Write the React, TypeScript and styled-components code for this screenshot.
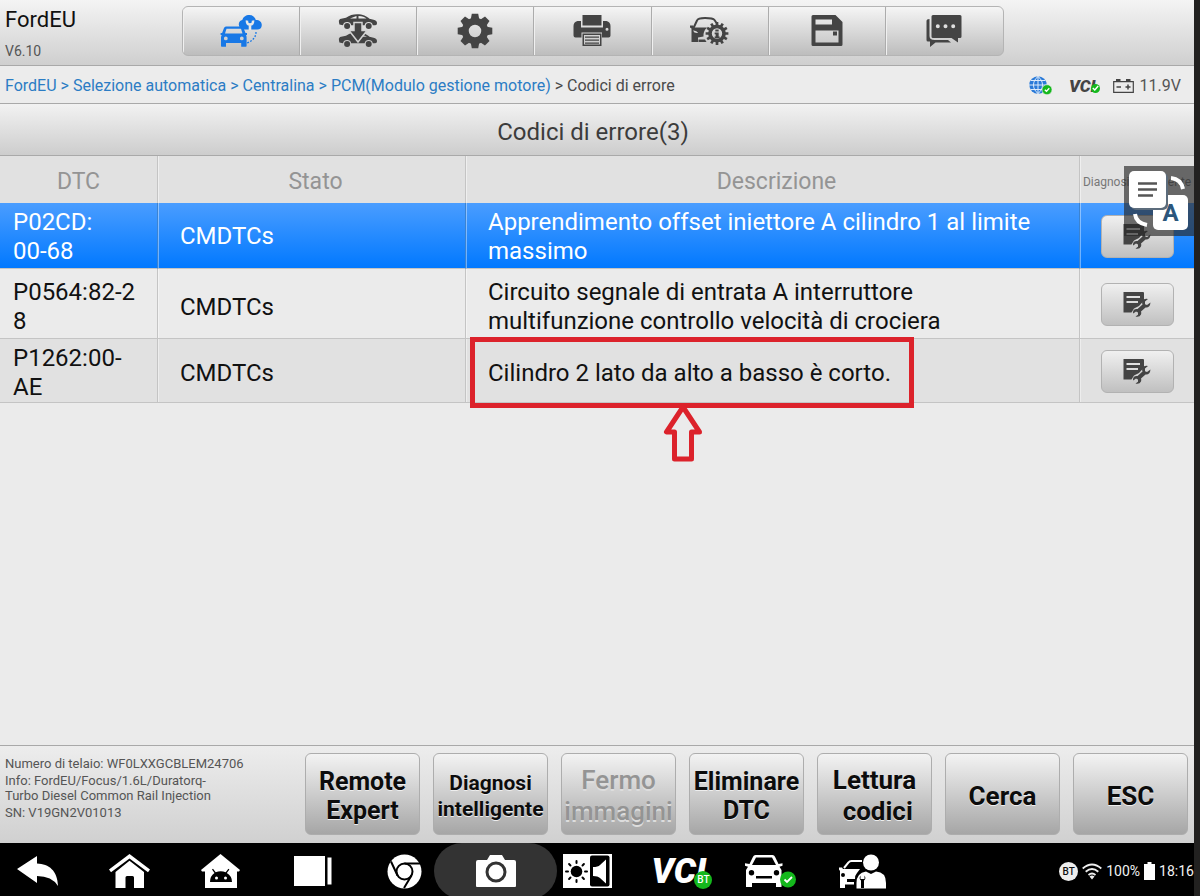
import React from "react";
import styled, { createGlobalStyle, css } from "styled-components";

const GlobalStyle = createGlobalStyle`
  *, *::before, *::after { box-sizing: border-box; }
  body { margin: 0; background: #222120; }
  body, button { font-family: Roboto, "Open Sans", sans-serif; }
  svg { display: block; }
`;

const Device = styled.div`
  display: flex;
  flex-direction: column;
  min-height: 100vh;
  margin-right: 6px;
  position: relative;
  background: #ebebeb;
  color: #111;
`;

const TopBar = styled.header`
  display: grid;
  grid-template-columns: 182px 1fr 190px;
  height: 66px;
  padding-top: 6px;
  align-items: start;
  background: linear-gradient(#f4f4f4, #cfcfcf);
  border-bottom: 1px solid #a9a9a9;
`;

const Brand = styled.div`
  padding-left: 5px;
`;

const BrandName = styled.h1`
  margin: 0;
  font-size: 22px;
  line-height: 28px;
  font-weight: 400;
`;

const Version = styled.div`
  margin-top: 8px;
  font-size: 14px;
  line-height: 18px;
  color: #555;
`;

const Toolbar = styled.nav`
  display: grid;
  grid-template-columns: repeat(7, 1fr);
  height: 50px;
  border: 1px solid #b4b4b4;
  border-radius: 6px;
  overflow: hidden;
  background: linear-gradient(#f5f5f5, #bdbdbd);
`;

const ToolButton = styled.button<{ $active?: boolean }>`
  display: flex;
  align-items: center;
  justify-content: center;
  padding: 0;
  border: 0;
  border-right: 1px solid #acacac;
  box-shadow: inset 1px 0 #f0f0f0;
  background: transparent;
  color: ${(p) => (p.$active ? "#1878e6" : "#444")};
  &:last-child { border-right: 0; }
`;

const PathBar = styled.div`
  display: flex;
  align-items: center;
  justify-content: space-between;
  height: 38px;
  padding: 3px 13px 0 5px;
  background: #ececec;
  border-bottom: 1px solid #a9a9a9;
`;

const Breadcrumb = styled.nav`
  font-size: 16px;
  line-height: 20px;
  color: #4a4a4a;
`;

const Crumb = styled.a`
  color: #2b7cc4;
  text-decoration: none;
`;

const Separator = styled.span<{ $last?: boolean }>`
  color: ${(p) => (p.$last ? "#4a4a4a" : "#2b7cc4")};
`;

const StatusGroup = styled.div`
  display: flex;
  align-items: center;
  gap: 17px;
  color: #444;
`;

const Voltage = styled.span`
  display: flex;
  align-items: center;
  gap: 6px;
  font-size: 16px;
  line-height: 20px;
  color: #555;
`;

const Vci = styled.span<{ $size: number }>`
  position: relative;
  display: inline-block;
  font-size: ${(p) => p.$size}px;
  line-height: 1;
  font-weight: 900;
  font-style: italic;
`;

const Badge = styled.span<{ $size: number }>`
  position: absolute;
  right: ${(p) => (p.$size > 12 ? -6 : -4)}px;
  bottom: ${(p) => (p.$size > 12 ? 0 : 2)}px;
  display: flex;
  align-items: center;
  justify-content: center;
  width: ${(p) => p.$size}px;
  height: ${(p) => p.$size}px;
  border-radius: 50%;
  background: #14b81c;
  color: #fff;
  font-size: 10px;
  font-weight: 500;
  font-style: normal;
`;

const TitleBar = styled.h2`
  display: flex;
  align-items: center;
  justify-content: center;
  height: 52px;
  margin: 0;
  padding: 4px 8px 0 0;
  font-size: 24px;
  line-height: 28px;
  font-weight: 400;
  color: #3c3c3c;
  background: linear-gradient(#f2f2f2, #cdcdcd);
  border-bottom: 1px solid #a9a9a9;
`;

const CodeTable = styled.table`
  width: 100%;
  table-layout: fixed;
  border-collapse: separate;
  border-spacing: 0;
  font-size: 24px;
  line-height: 29px;
`;

const Col = styled.col<{ $width?: number }>`
  ${(p) => p.$width && css`width: ${p.$width}px;`}
`;

const HeadCell = styled.th<{ $small?: boolean }>`
  height: 47px;
  padding: 4px 0 0 ${(p) => (p.$small ? 0 : 8)}px;
  font-size: ${(p) => (p.$small ? 12 : 23)}px;
  line-height: 28px;
  font-weight: 400;
  white-space: nowrap;
  color: ${(p) => (p.$small ? "#777" : "#949494")};
  background: #e1e1e1;
  border-right: 1px solid #c4c4c4;
  box-shadow: inset 1px 0 #efefef;
  &:first-child { padding-left: 0; box-shadow: none; }
  &:last-child { border-right: 0; }
`;

type Tone = "selected" | "light" | "dark";

const tones = {
  selected: css`
    --line: #3c83cf;
    --drop: 2px;
    background: linear-gradient(#4a9dff, #0078ff);
    color: #fff;
    height: 66px;
  `,
  light: css`
    --line: #c4c4c4;
    --drop: 7px;
    background: #ebebeb;
    height: 70px;
  `,
  dark: css`
    --line: #c4c4c4;
    --drop: 5px;
    background: #e1e1e1;
    height: 64px;
  `,
};

const Row = styled.tr<{ $tone: Tone }>`
  ${(p) => tones[p.$tone]}
`;

const Cell = styled.td<{ $inset: number }>`
  position: relative;
  padding: var(--drop) 16px 0 ${(p) => p.$inset}px;
  border-right: 1px solid var(--line);
  border-bottom: 1px solid #c4c4c4;
  box-shadow: inset 1px 0 rgba(255, 255, 255, 0.4);
`;

const CodeCell = styled(Cell)`
  padding-right: 8px;
  white-space: pre-line;
  word-break: break-all;
  box-shadow: none;
`;

const ActionCell = styled.td`
  padding: 2px 0 0;
  border-bottom: 1px solid #c4c4c4;
  box-shadow: inset 1px 0 rgba(255, 255, 255, 0.4);
`;

const ActionButton = styled.button`
  display: flex;
  align-items: center;
  justify-content: center;
  width: 73px;
  height: 43px;
  margin: 0 auto;
  padding: 0;
  color: #444;
  border: 1px solid #b2b2b2;
  border-radius: 6px;
  background: linear-gradient(#f0f0f0, #c0c0c0);
`;

const Highlight = styled.div`
  position: absolute;
  top: -2px;
  left: 4px;
  width: 444px;
  height: 71px;
  border: 5px solid #dc222b;
  pointer-events: none;
`;

const Pointer = styled.svg`
  position: absolute;
  top: 61px;
  left: 189px;
`;

const Footer = styled.footer`
  display: grid;
  grid-template-columns: 1fr repeat(7, 115px);
  column-gap: 13px;
  height: 98px;
  margin-top: auto;
  padding: 7px 6px 8px 5px;
  background: linear-gradient(#ededed, #d0d0d0);
  border-top: 1px solid #a9a9a9;
`;

const VehicleInfo = styled.div`
  padding-top: 3px;
  font-size: 13px;
  line-height: 15px;
  color: #555;
`;

const InfoLine = styled.p`
  margin: 0 0 2px;
  white-space: pre-line;
`;

const FooterButton = styled.button<{ $size: number; $line: number }>`
  height: 82px;
  padding: 4px 0 0;
  border: 1px solid #adadad;
  border-radius: 6px;
  background: linear-gradient(#f3f3f3, #a6a6a6);
  color: #0c0c0c;
  font-size: ${(p) => p.$size}px;
  line-height: ${(p) => p.$line}px;
  font-weight: 700;
  white-space: pre;
  text-shadow: 0 1px #eee;
  &:disabled { color: #949494; font-weight: 500; text-shadow: 0 2px #ddd; }
`;

const SystemBar = styled.div`
  height: 53px;
  overflow: hidden;
  background: #000;
`;

const SystemGrid = styled.div`
  display: grid;
  grid-template-columns: repeat(10, minmax(0, 1fr)) 286px;
  align-items: center;
  justify-items: center;
  height: 56px;
  margin-left: -8px;
`;

const SystemButton = styled.button<{ $lit?: boolean }>`
  display: flex;
  align-items: center;
  justify-content: center;
  width: ${(p) => (p.$lit ? 123 : 60)}px;
  height: 56px;
  margin: 0 ${(p) => (p.$lit ? -16 : 0)}px;
  padding: 0;
  border: 0;
  border-radius: 28px;
  background: ${(p) => (p.$lit ? "#333" : "transparent")};
  color: #fff;
`;

const Tray = styled.div`
  display: flex;
  align-items: center;
  justify-self: end;
  gap: 4px;
  font-size: 14px;
  line-height: 18px;
  color: #f2f2f2;
`;

const BtDisc = styled.span`
  width: 19px;
  height: 19px;
  border-radius: 50%;
  background: #eee;
  color: #111;
  font-size: 10px;
  line-height: 19px;
  font-weight: 500;
  text-align: center;
`;

const TranslateBubble = styled.button`
  position: absolute;
  top: 166px;
  right: 0;
  width: 70px;
  height: 70px;
  padding: 0;
  border: 0;
  background: rgba(40, 40, 40, 0.66);
`;

const Page = styled.span`
  position: absolute;
  top: 5px;
  left: 5px;
  z-index: 1;
  display: flex;
  align-items: center;
  justify-content: center;
  width: 37px;
  height: 37px;
  border-radius: 5px;
  background: #fff;
  box-shadow: 2px 2px #5c6c7c;
`;

const Letter = styled.span`
  position: absolute;
  top: 29px;
  left: 29px;
  width: 35px;
  height: 35px;
  border-radius: 5px;
  background: #fff;
  color: #2c567c;
  font-size: 24px;
  line-height: 37px;
  font-weight: 700;
`;

const Arcs = styled.svg`
  position: absolute;
  inset: 0;
`;

const CloudCarIcon = () => (
  <svg width="42" height="32" viewBox="0 0 42 32" fill="currentColor">
    <path fillRule="evenodd" d="M6 11.500h15.500q1.500 0 2 1.500l2 5h1.500v2h-1q.6 1 .6 2.500V31a.8.8 0 0 1-.8.800h-4.600V28H6v3.800H1.800A.8.8 0 0 1 1 31v-8.500Q1 21 1.800 20H.6v-2h1.500L4 13Q4.500 11.500 6 11.500ZM6.500 13.800 5 18.500h17.500L21 13.800ZM5.800 21.500a1.900 1.900 0 1 0 0 3.800 1.900 1.900 0 0 0 0-3.800Zm16 0a1.900 1.900 0 1 0 0 3.800 1.900 1.900 0 0 0 0-3.800Z" />
    <path d="M23.500 14.500a5 5 0 0 1-4.700-5.300c0-2 1.300-3.700 3.500-4.200.8-3 3.700-5 6.900-5 3.500 0 5.800 2 6.600 5 3.800 0 6 2 6 5s-2 4.500-4.500 4.500Z" />
    <path d="M27 5.500q-.5 4 3 4t3-4M30 9v6" fill="none" stroke="#e8e8e8" strokeWidth="2.600" />
    <path d="M36 17c0 4.500-2.500 8.500-9 11" fill="none" stroke="currentColor" strokeWidth="1.300" strokeDasharray="1.800 1.500" />
  </svg>
);

const sedan =
  "M1 8.500q-.8-2 1-3.500l6-1.300Q13 .3 19 .3c6 0 9.500 2 12.500 4.400l5 1.300Q39.800 7 38.800 10.500l-1.500.8H34.800a4.200 4.200 0 0 0-8.200 0H13.200a4.200 4.200 0 0 0-8.200 0L1.400 10.500Z";

const SwapCarsIcon = () => (
  <svg width="40" height="34" viewBox="0 0 40 34" fill="currentColor">
    <path d={sedan} />
    <circle cx="9.100" cy="12" r="3" />
    <circle cx="30.700" cy="12" r="3" />
    <path d="M12 4.400 18.500 2v2.500Zm8.500-2.500c4 0 6 1 8 2.700l-8 0Z" fill="#ececec" />
    <g transform="translate(0 18)">
      <path d={sedan} />
      <circle cx="9.100" cy="12" r="3" />
      <circle cx="30.700" cy="12" r="3" />
      <path d="m24 2.500 5 2.300h-6Z" fill="#ccc" />
    </g>
    <path d="M16 8.500h8v8h5L20 28l-9-11.500h5Z" stroke="#d4d4d4" strokeWidth="1.500" />
  </svg>
);

const Gear = ({ teeth, hole }: { teeth: number; hole: number }) => (
  <>
    {Array.from({ length: teeth }, (_, i) => (
      <path key={i} d={teeth > 8 ? "M-2-17h4v8h-4Z" : "M-3.200-17.300h6.400l1.300 7h-9Z"} transform={`rotate(${(i * 360) / teeth})`} />
    ))}
    <circle r={(12.500 + hole) / 2} fill="none" stroke="currentColor" strokeWidth={14 - hole} />
  </>
);

const SettingsIcon = () => (
  <svg width="36" height="36" viewBox="-18 -18 36 36" fill="currentColor">
    <Gear teeth={8} hole={7} />
  </svg>
);

const PrinterIcon = () => (
  <svg width="38" height="32" viewBox="0 0 38 32" fill="currentColor">
    <path d="M9.500 0h19v10.500h-19Z" />
    <path fillRule="evenodd" d="M4.500 6H8v6.500h22V6h3.500q4 1 4 5v9.500q0 2-2 2H29v-5H8.500v5h-6q-2 0-2-2V11q0-4 4-5ZM34 12.800a1.500 1.500 0 1 0 0 3 1.500 1.500 0 0 0 0-3Z" />
    <path fillRule="evenodd" d="M9.500 18.500h19V31h-19ZM11 20v9.500h16V20Zm1 1.500h14v1.300H12Zm0 3h14v1.300H12Zm0 3h14v1.300H12Z" />
  </svg>
);

const CarInfoIcon = () => (
  <svg width="39" height="28" viewBox="0 0 39 28" fill="currentColor">
    <path d="M3.500 11 7 3.500Q8 1 15 1q8 0 9.500 2l2 3" fill="none" stroke="currentColor" strokeWidth="2" />
    <path fillRule="evenodd" d="M0 8.500h3l1 2h13q-4 4-3.500 9L8 20.500V25H1.500V11.500L0 10.500ZM3 13.500q1 3 5 2.500-1-2.500-5-2.500Z" />
    <path d="M8.500 22.500H15l1.500 2.500h-8Z" />
    <g transform="translate(27 16.500) scale(.67)">
      <Gear teeth={12} hole={8.500} />
      <path d="M-2.500-6h5v3h-5ZM-3.500-1.500h6V4.500H4V7h-7.500V4.500H-2V1h-1.500Z" />
    </g>
  </svg>
);

const SaveIcon = () => (
  <svg width="32" height="32" viewBox="0 0 32 32" fill="currentColor">
    <path fillRule="evenodd" d="M2 0h22.500L31.500 7v22.500a1.500 1.500 0 0 1-1.500 1.500H2a1.500 1.500 0 0 1-1.500-1.500v-28Q.5 0 2 0ZM4.500 4.500v5H21v-5Zm0 11v12h23v-12Zm17.500 1h4v4h-4Z" />
  </svg>
);

const ChatIcon = () => (
  <svg width="36" height="32" viewBox="0 0 36 32" fill="currentColor">
    <path fillRule="evenodd" d="M7 0h27q1.500 0 1.500 1.500v20q0 1.500-1.500 1.500h-2v4.500L25.500 23H7q-1.500 0-1.500-1.500v-20Q5.500 0 7 0Zm4.800 9.300a2 2 0 1 0 0 4 2 2 0 0 0 0-4Zm7.700 0a2 2 0 1 0 0 4 2 2 0 0 0 0-4Zm7.700 0a2 2 0 1 0 0 4 2 2 0 0 0 0-4Z" />
    <path d="M3.500 4Q.5 4 .5 6v19q0 1.500 1.500 1.500h2V32l5.500-4.500H25l-3-2.500H8.500Q3.500 25 3.500 21Z" />
  </svg>
);

const GlobeIcon = () => (
  <svg width="23" height="20" viewBox="0 0 23 20" fill="none">
    <circle cx="9" cy="9" r="8.700" fill="#2a7ad8" />
    <path d="M9 0v18M0 9h18M2 4.500h14M2 13.500h14M9 .5c-6 4.500-6 12.500 0 17 6-4.500 6-12.500 0-17Z" stroke="#dceafa" />
    <circle cx="18" cy="13.700" r="5" fill="#14b81c" stroke="#ececec" strokeWidth=".6" />
    <path d="m15.800 13.700 1.700 1.600 2.800-3" stroke="#fff" strokeWidth="1.300" />
  </svg>
);

const Check = () => (
  <svg width="7" height="6" viewBox="0 0 7 6" fill="none" stroke="#fff" strokeWidth="1.400">
    <path d="m.8 3 2 2L6.200 1" />
  </svg>
);

const CarBatteryIcon = () => (
  <svg width="21" height="14" viewBox="0 0 21 14" fill="none" stroke="#444">
    <path d="M.7 2.700h19.600v10.600H.7Z" strokeWidth="1.200" />
    <path d="M3 1.200h4.500M13 1.200h4.500" strokeWidth="2.400" />
    <path d="M3.500 8H8M12.500 8h5M15 5.500v5" strokeWidth="1.500" />
  </svg>
);

const RepairIcon = () => (
  <svg width="28" height="25" viewBox="0 0 28 25" fill="currentColor">
    <path fillRule="evenodd" d="M.5 0H20q1 0 1 1v7.500l-5 5.500-5 2.500-2.500 4H.5ZM3.500 4v2h13.500V4Zm0 5v2H15V9Z" />
    <path d="M27.500 10.500 24 13l-2-.8V9.500l3-2.500q-4-1-5.500 2.200-.8 1.600 0 3.300L14.500 17q-4-.5-4.500 3 0 1 .3 1.500l2.700-2 2 1v2.200L12.500 24.500q4 1 5.500-2 .5-1.500 0-3l4.500-4q4.500.5 5-5Z" />
  </svg>
);

const BackIcon = () => (
  <svg width="42" height="31" viewBox="0 0 42 31" fill="currentColor">
    <path d="M0 13 20 0v7.500C32 8 40.500 14.500 41 30q-6-10-21-10v7Z" />
  </svg>
);

const HomeIcon = () => (
  <svg width="41" height="35" viewBox="0 0 41 35" fill="currentColor">
    <path d="M20.500 0 41 15.500l-2 2.800L20.500 4.500 2 18.300 0 15.500Z" />
    <path d="M20.500 6.800 35 18v16H25V23.500q0-1.500-1.500-1.500h-5.500q-1.500 0-1.500 1.500V34H6.500V18Z" />
  </svg>
);

const AndroidHomeIcon = () => (
  <svg width="39" height="35" viewBox="0 0 39 35" fill="currentColor">
    <path d="M19.500 0 39 16l-1 1.500h-2V34H4V17.500H1L0 16Z" />
    <path d="M9 28q0-6 4.500-9L11 15.500l1-.8 2.700 3.500q5-2 10 0l2.700-3.500 1 .8-2.600 3.500Q31 22 31 28Z" fill="#000" />
    <circle cx="15.500" cy="24" r="1.500" />
    <circle cx="24.500" cy="24" r="1.500" />
  </svg>
);

const RecentsIcon = () => (
  <svg width="38" height="30" viewBox="0 0 38 30" fill="currentColor">
    <path d="M0 0h31v30H0ZM33.500 1.500h4v27h-4Z" />
  </svg>
);

const ChromeIcon = () => (
  <svg width="35" height="35" viewBox="0 0 35 35" fill="none" stroke="#000" strokeWidth="2">
    <circle cx="17.500" cy="17.500" r="17" fill="#fff" stroke="none" />
    <circle cx="17.500" cy="17.500" r="8" />
    <path d="M17.500 9.500H33M10.500 21.500 4 7.500M24.500 21.500 17 34" />
    <circle cx="17.500" cy="17.500" r="4" fill="#fff" stroke="none" />
  </svg>
);

const CameraIcon = () => (
  <svg width="40" height="32" viewBox="0 0 40 32" fill="currentColor">
    <path fillRule="evenodd" d="M2 5h9l3-5h12l3 5h9q2 0 2 2v24q0 1-1 1H1q-1 0-1-1V7q0-2 2-2ZM20 6.500a10.500 10.500 0 1 0 0 21 10.500 10.500 0 0 0 0-21Zm0 3a7.500 7.500 0 1 1 0 15 7.500 7.500 0 0 1 0-15Z" />
  </svg>
);

const DisplayIcon = () => (
  <svg width="49" height="34" viewBox="0 0 49 34" fill="none">
    <path d="M0 0h49v34H0Z" fill="#fff" />
    <circle cx="13.500" cy="17.500" r="5.800" fill="#000" />
    <g stroke="#000" strokeWidth="2" strokeLinecap="round">
      {Array.from({ length: 8 }, (_, i) => (
        <path key={i} d="M13.500 7v2" transform={`rotate(${i * 45} 13.500 17.500)`} />
      ))}
    </g>
    <rect x="27" y="1.500" width="19.500" height="31" rx="2" fill="#000" />
    <path d="M30 13q5 0 7-2l6-5.500v24L37 24q-2-2-7-2Z" fill="#fff" />
  </svg>
);

const CarOkIcon = () => (
  <svg width="51" height="33" viewBox="0 0 51 33" fill="currentColor">
    <path fillRule="evenodd" d="M10.500 0h17q1.800 0 2.500 1.800L33.500 9l4-.8v2.500l-3 1 2 3.300V32H31v-4H7v4H1V15l2-3.300-3-1V8.200L4.500 9 8 1.800Q8.700 0 10.500 0Zm.5 2.500L7 10h24l-4-7.500ZM6.500 15a2.700 2.700 0 1 0 0 5.400 2.700 2.700 0 0 0 0-5.400Zm25 0a2.700 2.700 0 1 0 0 5.400 2.700 2.700 0 0 0 0-5.400ZM11 21v2.500h16V21Z" />
    <circle cx="43" cy="24.500" r="8" fill="#14b81c" />
    <path d="m39.500 24.500 2.500 2.500 5-5" fill="none" stroke="#fff" strokeWidth="1.800" />
  </svg>
);

const TechnicianIcon = () => (
  <svg width="47" height="35" viewBox="0 0 47 35" fill="currentColor">
    <path d="M5 14 9.500 8.500q1-1.500 3-1.500H23" fill="none" stroke="currentColor" strokeWidth="2" />
    <path fillRule="evenodd" d="M0 13.500h3l1 1.500h17l-3 4q-2 2-2 6H8v3h7v2.500H6V34H1V17l-1-1.500ZM4 19a2 2 0 1 0 0 4 2 2 0 0 0 0-4Z" />
    <circle cx="32" cy="8.500" r="8" />
    <path fillRule="evenodd" d="M27 17.500 32 20l5-2.500Q47 18 47 29v5.500H17.500V29q0-10 9.500-11.500ZM21.500 21.500q-2 3 .5 5V34h3v-7.500q2.500-2 .5-5V25h-4Z" />
  </svg>
);

const WifiIcon = () => (
  <svg width="20" height="17" viewBox="0 0 20 17" fill="none" stroke="#eee" strokeWidth="1.800">
    <path d="M.7 5.500q9.300-8 18.600 0M3.700 8.800q6.300-5.500 12.600 0M6.500 12q3.500-3 7 0" />
    <path d="m7.500 13.500 2.500 3 2.500-3q-2.500-1.800-5 0Z" fill="#eee" stroke="none" />
  </svg>
);

const ChargeIcon = () => (
  <svg width="11" height="18" viewBox="0 0 11 18" fill="#fff">
    <path d="M3.500 0h4v2H11v16H0V2h3.500Z" />
  </svg>
);

const tools = [
  { label: "Diagnosi cloud", icon: <CloudCarIcon />, active: true },
  { label: "Cambia veicolo", icon: <SwapCarsIcon /> },
  { label: "Impostazioni", icon: <SettingsIcon /> },
  { label: "Stampa", icon: <PrinterIcon /> },
  { label: "Info veicolo", icon: <CarInfoIcon /> },
  { label: "Salva", icon: <SaveIcon /> },
  { label: "Messaggi", icon: <ChatIcon /> },
];

const crumbs = ["FordEU", "Selezione automatica", "Centralina", "PCM(Modulo gestione motore)"];

const codes: { code: string; status: string; text: string; tone: Tone; marked?: boolean }[] = [
  { code: "P02CD:\n00-68", status: "CMDTCs", text: "Apprendimento offset iniettore A cilindro 1 al limite massimo", tone: "selected" },
  { code: "P0564:82-2\n8", status: "CMDTCs", text: "Circuito segnale di entrata A interruttore multifunzione controllo velocità di crociera", tone: "light" },
  { code: "P1262:00-\nAE", status: "CMDTCs", text: "Cilindro 2 lato da alto a basso è corto.", tone: "dark", marked: true },
];

const actions = [
  { label: "Remote\nExpert", size: 25, line: 29 },
  { label: "Diagnosi\nintelligente", size: 21, line: 26 },
  { label: "Fermo\nimmagini", size: 26, line: 31, disabled: true },
  { label: "Eliminare\nDTC", size: 25, line: 29 },
  { label: "Lettura\n codici", size: 26, line: 31 },
  { label: "Cerca", size: 26, line: 31 },
  { label: "ESC", size: 26, line: 31 },
];

const systemItems = [
  { label: "Indietro", icon: <BackIcon /> },
  { label: "Home", icon: <HomeIcon /> },
  { label: "Home Android", icon: <AndroidHomeIcon /> },
  { label: "Recenti", icon: <RecentsIcon /> },
  { label: "Chrome", icon: <ChromeIcon /> },
  { label: "Fotocamera", icon: <CameraIcon />, lit: true },
  { label: "Schermo e audio", icon: <DisplayIcon /> },
  { label: "VCI", icon: <Vci $size={35}>VCI<Badge $size={18}>BT</Badge></Vci> },
  { label: "Veicolo", icon: <CarOkIcon /> },
  { label: "Assistenza", icon: <TechnicianIcon /> },
];

export default function App() {
  return (
    <>
      <GlobalStyle />
      <Device>
        <TopBar>
          <Brand>
            <BrandName>FordEU</BrandName>
            <Version>V6.10</Version>
          </Brand>
          <Toolbar>
            {tools.map((t) => (
              <ToolButton key={t.label} aria-label={t.label} $active={t.active}>{t.icon}</ToolButton>
            ))}
          </Toolbar>
        </TopBar>

        <PathBar>
          <Breadcrumb>
            {crumbs.map((c, i) => (
              <React.Fragment key={c}>
                <Crumb href="#">{c}</Crumb>
                <Separator $last={i === crumbs.length - 1}> &gt; </Separator>
              </React.Fragment>
            ))}
            <span>Codici di errore</span>
          </Breadcrumb>
          <StatusGroup>
            <GlobeIcon />
            <Vci $size={17}>VCI<Badge $size={9}><Check /></Badge></Vci>
            <Voltage><CarBatteryIcon />11.9V</Voltage>
          </StatusGroup>
        </PathBar>

        <TitleBar>Codici di errore(3)</TitleBar>

        <CodeTable>
          <colgroup>
            <Col $width={158} />
            <Col $width={308} />
            <Col />
            <Col $width={114} />
          </colgroup>
          <thead>
            <tr>
              <HeadCell>DTC</HeadCell>
              <HeadCell>Stato</HeadCell>
              <HeadCell>Descrizione</HeadCell>
              <HeadCell $small>Diagnosi intelligente</HeadCell>
            </tr>
          </thead>
          <tbody>
            {codes.map((c) => (
              <Row key={c.code} $tone={c.tone}>
                <CodeCell $inset={13}>{c.code}</CodeCell>
                <Cell $inset={22}>{c.status}</Cell>
                <Cell $inset={22}>
                  {c.text}
                  {c.marked && (
                    <>
                      <Highlight />
                      <Pointer width="56" height="64" viewBox="0 0 56 64" fill="none" stroke="#dc222b" strokeWidth="5" strokeLinejoin="round">
                        <path d="M28 7 11.500 32h8v27h17V32h8Z" />
                      </Pointer>
                    </>
                  )}
                </Cell>
                <ActionCell>
                  <ActionButton aria-label="Diagnosi intelligente"><RepairIcon /></ActionButton>
                </ActionCell>
              </Row>
            ))}
          </tbody>
        </CodeTable>

        <Footer>
          <VehicleInfo>
            <InfoLine>Numero di telaio: WF0LXXGCBLEM24706</InfoLine>
            <InfoLine>{"Info: FordEU/Focus/1.6L/Duratorq-\nTurbo Diesel Common Rail Injection"}</InfoLine>
            <InfoLine>SN: V19GN2V01013</InfoLine>
          </VehicleInfo>
          {actions.map((a) => (
            <FooterButton key={a.label} $size={a.size} $line={a.line} disabled={a.disabled}>{a.label}</FooterButton>
          ))}
        </Footer>

        <SystemBar>
          <SystemGrid>
            {systemItems.map((s) => (
              <SystemButton key={s.label} aria-label={s.label} $lit={s.lit}>{s.icon}</SystemButton>
            ))}
            <Tray>
              <BtDisc>BT</BtDisc>
              <WifiIcon />
              <span>100%</span>
              <ChargeIcon />
              <span>18:16</span>
            </Tray>
          </SystemGrid>
        </SystemBar>

        <TranslateBubble aria-label="Traduci">
          <Arcs width="70" height="70" viewBox="0 0 70 70" fill="none" stroke="#fff" strokeWidth="4">
            <path d="M47 12q10 1 12 11M11 48q1 9 12 11" />
          </Arcs>
          <Page>
            <svg width="19" height="15" viewBox="0 0 19 15" stroke="#555" strokeWidth="2.400">
              <path d="M0 1.500h19M0 7.500h19M0 13.500h15" />
            </svg>
          </Page>
          <Letter>A</Letter>
        </TranslateBubble>
      </Device>
    </>
  );
}
